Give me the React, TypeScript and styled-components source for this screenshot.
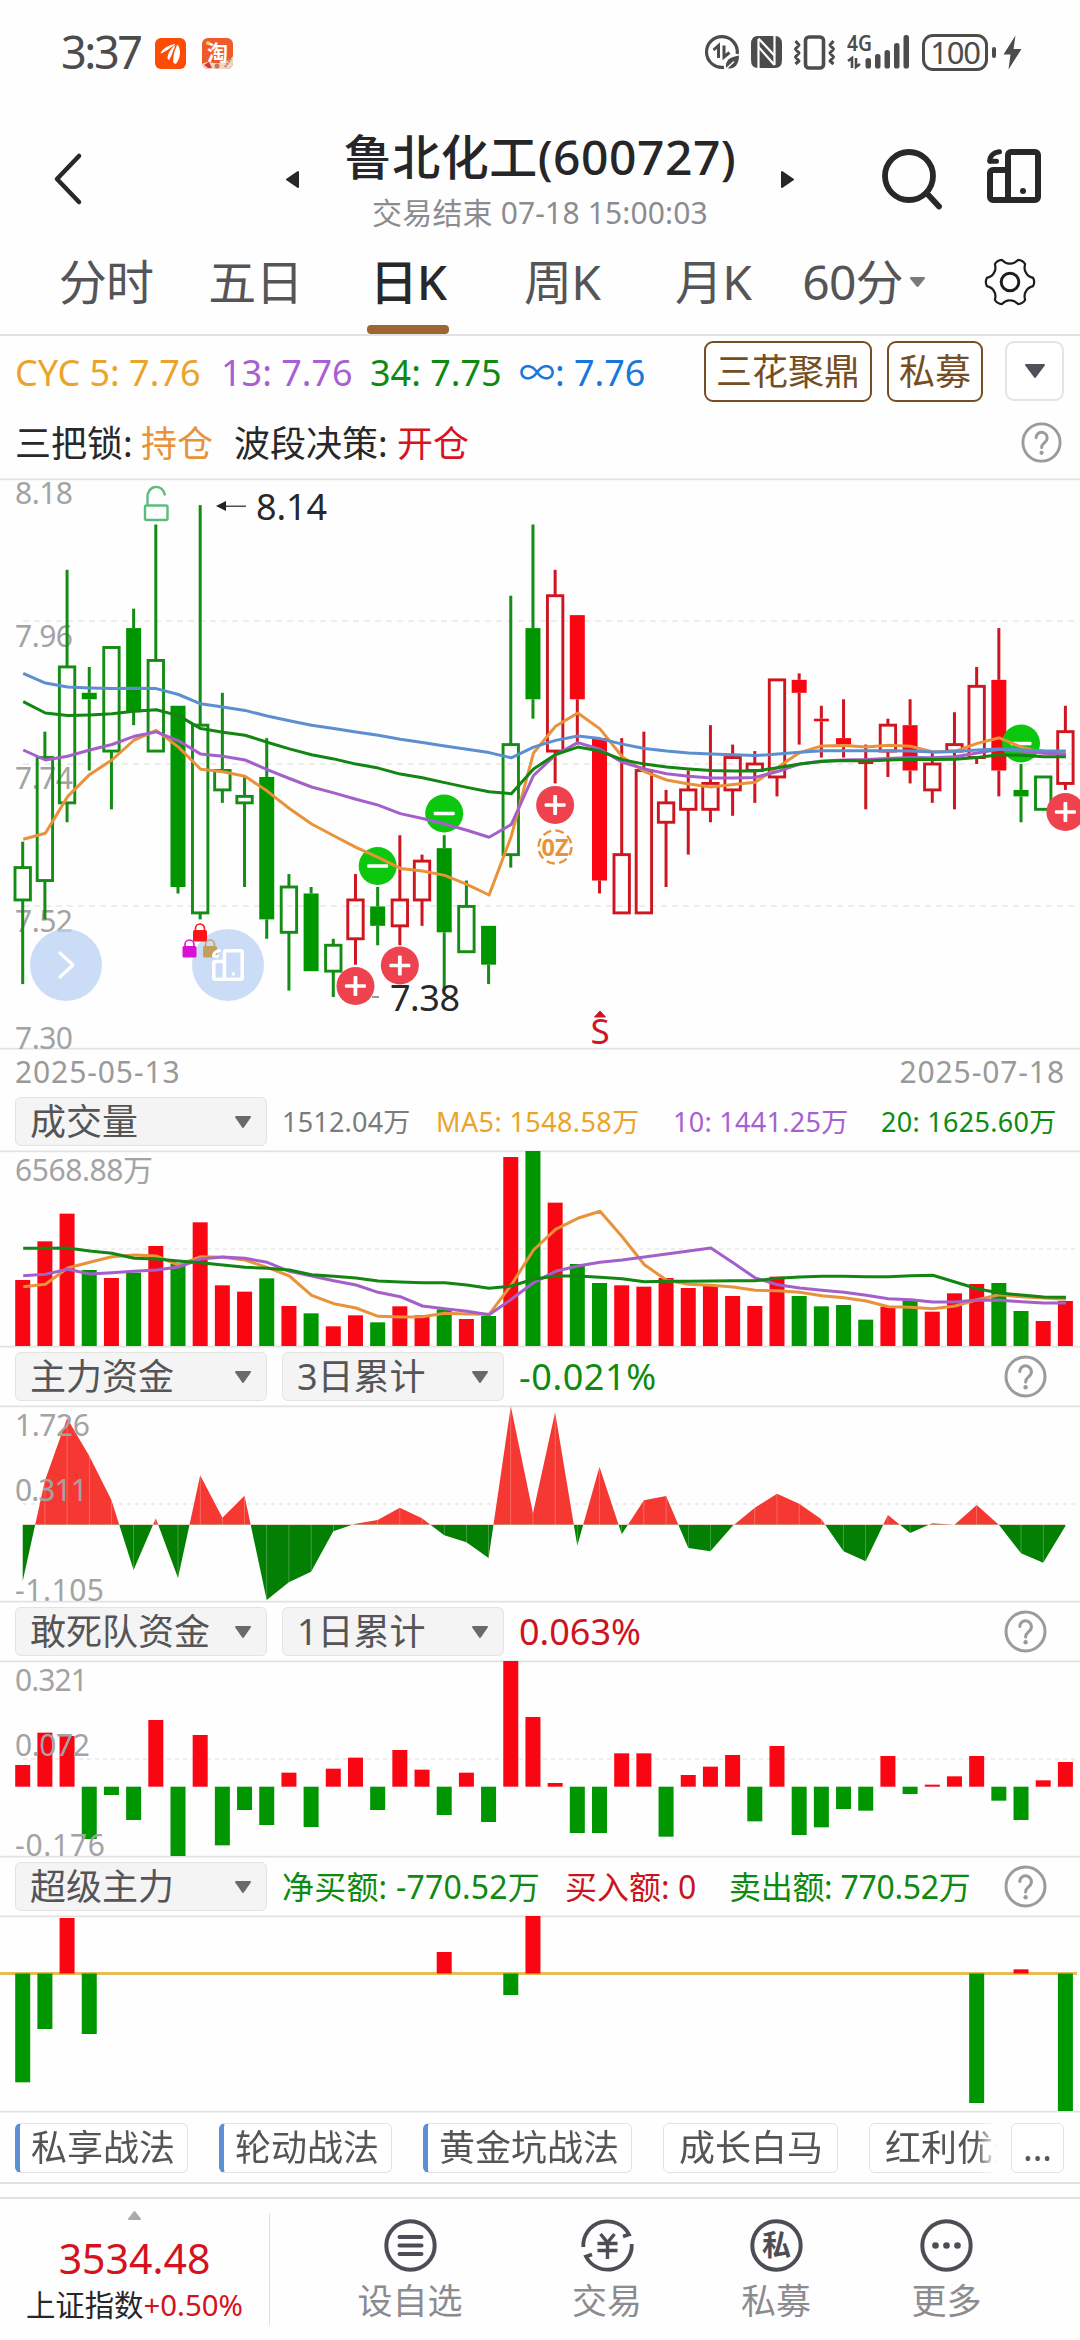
import React from "react";
import styled, { createGlobalStyle } from "styled-components";

const Global = createGlobalStyle`
  * { box-sizing: border-box; }
  html, body { margin: 0; padding: 0; background: #fefefe; }
  body { font-family: "Noto Sans", "Noto Sans CJK SC", sans-serif; color: #262628; }
  svg { display: block; flex: none; overflow: visible; }
`;

const C = {
  ink: "#28282a",
  mid: "#555557",
  soft: "#8c8c90",
  axis: "#a3a3a3",
  rule: "#e2e2e2",
  up: "#fa0512",
  upLine: "#cf1620",
  down: "#009600",
  downLine: "#158c15",
  orange: "#e8923a",
  purple: "#a45fcb",
  green: "#128512",
  blue: "#5c8fcf",
};

const Screen = styled.div`
  width: 1080px;
  height: 2340px;
  display: flex;
  flex-direction: column;
  overflow: hidden;
  background: #fefefe;
`;

/* ---------- status bar ---------- */

const StatusBar = styled.div`
  height: 106px;
  display: flex;
  align-items: center;
  padding: 0 58px 0 61px;
  color: #4c4c4c;
`;
const Clock = styled.span`
  font-size: 45px;
  line-height: 50px;
  letter-spacing: -2.4px;
  width: 94px;
  margin-top: -2px;
`;
const AppIcons = styled.div`
  display: flex;
  gap: 16px;
  flex: 1;
`;
const StatusIcons = styled.div`
  display: flex;
  align-items: center;
  height: 38px;
  margin-top: -2px;
`;
const StatusSlot = styled.div<{ $ml?: number }>`
  margin-left: ${(p) => p.$ml ?? 0}px;
`;
const Battery = styled.div`
  width: 66px;
  height: 37px;
  border: 3px solid #4c4c4c;
  border-radius: 11px;
  font-size: 31px;
  line-height: 30px;
  letter-spacing: -1.2px;
  text-align: center;
  margin-left: 12px;
`;
const BatteryNub = styled.div`
  width: 4px;
  height: 11px;
  border-radius: 2px;
  background: #4c4c4c;
  margin: 0 7px 0 4px;
`;

/* ---------- title bar ---------- */

const TitleBar = styled.header`
  height: 134px;
  display: grid;
  grid-template-columns: 286px 1fr 286px;
  align-items: center;
`;
const TitleLeft = styled.div`
  padding: 12px 0 0 52px;
`;
const TitleMid = styled.div`
  display: flex;
  justify-content: space-between;
  align-items: center;
`;
const TitleText = styled.div`
  display: flex;
  flex-direction: column;
  align-items: center;
  padding-top: 14px;
`;
const StockName = styled.h1`
  margin: 0;
  font-size: 48px;
  line-height: 60px;
  font-weight: 500;
  letter-spacing: 0.5px;
  white-space: nowrap;
`;
const Subtitle = styled.span`
  font-size: 30px;
  line-height: 42px;
  margin-top: 5px;
  letter-spacing: 0.15px;
  color: ${C.soft};
  white-space: nowrap;
`;
const TitleRight = styled.div`
  display: flex;
  padding: 12px 0 0 88px;
  gap: 44px;
`;
const ArrowBox = styled.div`
  padding-top: 12px;
`;

/* ---------- period tabs ---------- */

const Tabs = styled.nav`
  height: 96px;
  padding-left: 31px;
  display: grid;
  grid-template-columns: 150px 149px 156px 152px 150px 151px 141px;
  border-bottom: 2px solid ${C.rule};
`;
const Tab = styled.div<{ $active?: boolean }>`
  display: flex;
  align-items: center;
  justify-content: center;
  gap: 7px;
  position: relative;
  padding-bottom: 11px;
  font-size: 48px;
  letter-spacing: -0.8px;
  line-height: 60px;
  font-weight: ${(p) => (p.$active ? 500 : 400)};
  color: ${(p) => (p.$active ? C.ink : C.mid)};
  &::after {
    content: "";
    display: ${(p) => (p.$active ? "block" : "none")};
    position: absolute;
    bottom: 0;
    left: calc(50% - 41px);
    width: 82px;
    height: 9px;
    border-radius: 4px;
    background: #9c6733;
  }
`;

/* ---------- indicator summary ---------- */

const Summary = styled.section`
  height: 142px;
  padding: 4px 18px 0 15px;
`;
const SummaryRow = styled.div<{ $h: number }>`
  height: ${(p) => p.$h}px;
  display: flex;
  align-items: center;
  font-size: 36px;
  line-height: 48px;
  white-space: nowrap;
`;
const Value = styled.span<{ $c: string; $w?: number }>`
  color: ${(p) => p.$c};
  padding-top: 4px;
  ${(p) => (p.$w ? `width: ${p.$w}px;` : "")}
`;
const Spacer = styled.div`
  flex: 1;
`;
const OutlineButton = styled.button`
  font: inherit;
  font-size: 36px;
  line-height: 48px;
  height: 61px;
  padding: 2px 10px 0;
  margin-right: 15px;
  background: #fff;
  color: #754e24;
  border: 2px solid #754e24;
  border-radius: 9px;
`;
const DropButton = styled.button`
  width: 59px;
  height: 60px;
  margin-left: 7px;
  margin-right: -2px;
  padding: 0;
  display: flex;
  align-items: center;
  justify-content: center;
  background: #fff;
  border: 2px solid #e4e4e4;
  border-radius: 9px;
`;

/* ---------- panels ---------- */

const ChartBox = styled.div`
  position: relative;
`;
const FloatButton = styled.div<{ $x: number }>`
  position: absolute;
  left: ${(p) => p.$x}px;
  bottom: 49px;
  width: 72px;
  height: 72px;
  border-radius: 50%;
  display: flex;
  align-items: center;
  justify-content: center;
  background: rgba(188, 210, 243, 0.78);
`;
const LockBadge = styled.svg`
  position: absolute;
  left: -10px;
  top: -6px;
`;
const FloatIcon = styled.div`
  position: relative;
`;
const Dates = styled.div`
  height: 43px;
  padding: 0 15px;
  display: flex;
  justify-content: space-between;
  align-items: center;
  font-size: 30px;
  letter-spacing: 0.9px;
  line-height: 40px;
  color: #999;
`;
const PanelHead = styled.div`
  height: 57px;
  padding: 0 33px 0 15px;
  display: flex;
  align-items: center;
  white-space: nowrap;
`;
const Picker = styled.div<{ $w: number }>`
  flex: none;
  width: ${(p) => p.$w}px;
  height: 49px;
  margin-right: 15px;
  padding: 0 15px 0 14px;
  display: flex;
  align-items: center;
  justify-content: space-between;
  background: #f4f4f4;
  border: 1px solid #e3e3e3;
  border-radius: 6px;
  font-size: 36px;
  line-height: 46px;
  color: ${C.mid};
`;
const Figure = styled.span<{ $c: string; $size: number; $w?: number; $ls?: number }>`
  flex: none;
  color: ${(p) => p.$c};
  font-size: ${(p) => p.$size}px;
  line-height: 46px;
  letter-spacing: ${(p) => p.$ls ?? 0}px;
  ${(p) => (p.$w ? `width: ${p.$w}px;` : "")}
`;

/* ---------- strategy tags ---------- */

const TagRow = styled.div`
  height: 71px;
  padding: 0 16px 0 15px;
  display: flex;
  align-items: center;
  border-bottom: 2px solid ${C.rule};
`;
const TagScroll = styled.div`
  width: 981px;
  display: flex;
  gap: 31px;
  overflow: hidden;
  mask-image: linear-gradient(to right, #000 960px, transparent 983px);
`;
const Tag = styled.div<{ $marked?: boolean }>`
  flex: none;
  height: 50px;
  padding: 0 ${(p) => (p.$marked ? 12 : 14)}px 0 ${(p) => (p.$marked ? 11 : 15)}px;
  border: 1px solid #e2e2e2;
  border-left: ${(p) => (p.$marked ? "5px solid #5b90d6" : "1px solid #e2e2e2")};
  border-radius: 6px;
  font-size: 36px;
  line-height: 47px;
  color: ${C.mid};
  background: #fff;
`;
const MoreTag = styled(Tag)`
  width: 53px;
  margin-left: 15px;
  padding: 0;
  text-align: center;
`;

/* ---------- bottom bar ---------- */

const BottomBar = styled.footer`
  height: 143px;
  margin-top: 13px;
  border-top: 2px solid ${C.rule};
  display: flex;
`;
const IndexBox = styled.div`
  width: 269px;
  display: flex;
  flex-direction: column;
  align-items: center;
  padding-top: 12px;
`;
const IndexValue = styled.div`
  margin-top: 10px;
  font-size: 41px;
  line-height: 56px;
  color: #d3131d;
`;
const IndexName = styled.div`
  font-size: 29.4px;
  line-height: 40px;
  margin-top: -1px;
  white-space: nowrap;
  em { font-style: normal; color: #d3131d; }
`;
const Divider = styled.div`
  width: 1px;
  height: 112px;
  margin-top: 14px;
  background: #dedede;
`;
const NavItem = styled.div<{ $w: number }>`
  width: ${(p) => p.$w}px;
  padding-top: 20px;
  display: flex;
  flex-direction: column;
  align-items: center;
  font-size: 35px;
  line-height: 46px;
  color: ${C.soft};
  svg { margin-bottom: 6px; }
`;

/* ---------- icons ---------- */

const Caret = ({ w = 16, h = 12, color = "#6a6a6c", dir = "down" }: { w?: number; h?: number; color?: string; dir?: string }) => {
  const d: Record<string, string> = {
    down: `M1 1H${w - 1}L${w / 2} ${h - 1}Z`,
    up: `M1 ${h - 1}H${w - 1}L${w / 2} 1Z`,
    left: `M${w - 1} 1V${h - 1}L1 ${h / 2}Z`,
    right: `M1 1V${h - 1}L${w - 1} ${h / 2}Z`,
  };
  return (
    <svg width={w} height={h}>
      <path d={d[dir]} fill={color} stroke={color} strokeWidth="2" strokeLinejoin="round" />
    </svg>
  );
};

const Help = ({ size = 43 }: { size?: number }) => (
  <svg width={size} height={size} viewBox="0 0 43 43" fill="none" stroke="#9b9b9b" strokeWidth="3">
    <circle cx="21.5" cy="21.5" r="19.5" />
    <path d="M15.8 16.6a5.8 5.8 0 1 1 9.8 4.2c-2.2 2-4 3-4 6.2" strokeLinecap="round" />
    <circle cx="21.6" cy="32.3" r="2.2" fill="#9b9b9b" stroke="none" />
  </svg>
);

const DevicesIcon = ({ size, color, sw = 6 }: { size: number; color: string; sw?: number }) => (
  <svg width={size} height={size} viewBox="0 0 54 54" fill="none" stroke={color} strokeWidth={sw} strokeLinejoin="round">
    <path d="M21 51V6a3 3 0 0 1 3-3h24a3 3 0 0 1 3 3v42a3 3 0 0 1-3 3H6a3 3 0 0 1-3-3V24a3 3 0 0 1 3-3h15" />
    <path d="M12.500 2.700C6 3.500 2.700 7.500 2.800 12" strokeLinecap="round" strokeWidth="5" />
    <path d="M3 12.200h6.500" strokeLinecap="round" strokeWidth="5" />
    <circle cx="36" cy="42" r="3" fill={color} stroke="none" />
  </svg>
);

const gearPath = (() => {
  const pts: string[] = [];
  const at = (r: number, a: number) => {
    const t = (a * Math.PI) / 180;
    return `${(25 + r * Math.cos(t)).toFixed(2)} ${(25 + r * Math.sin(t)).toFixed(2)}`;
  };
  for (let k = 0; k < 6; k++) {
    const a = k * 60;
    pts.push(`${k ? "L" : "M"}${at(23.5, a - 10)}Q${at(25.2, a)} ${at(23.5, a + 10)}`);
    pts.push(`C${at(20, a + 15)} ${at(18.3, a + 23)} ${at(18.5, a + 30)}`);
    pts.push(`C${at(18.3, a + 37)} ${at(20, a + 45)} ${at(23.5, a + 50)}`);
  }
  return pts.map((s) => s.replace(/(\d) (?=-?\d+\.\d+ )/g, "$1 ")).join("") + "Z";
})();

const Gear = () => (
  <svg width="50" height="50" fill="none" stroke="#1c1c1c">
    <path d={gearPath} strokeWidth="2.2" strokeLinejoin="round" />
    <circle cx="25" cy="25" r="8.8" strokeWidth="3" />
  </svg>
);

/* ---------- chart helpers ---------- */

const x = (i: number) => 22.7 + 22.185 * i;
const BAR = 15;

const Label = ({ y, w, children, lx = 15 }: { y: number; w: number; lx?: number; children: string }) => (
  <text x={lx} y={y} fontSize="30" fill={C.axis} textLength={w} lengthAdjust="spacing">
    {children}
  </text>
);

const Line = ({ pts, color, map, w = 3 }: { pts: number[]; color: string; map: (v: number) => number; w?: number }) => (
  <polyline
    points={pts.map((p, i) => `${(x(i) + 0.5).toFixed(1)},${map(p).toFixed(1)}`).join(" ")}
    fill="none"
    stroke={color}
    strokeWidth={w}
    strokeLinejoin="round"
  />
);

const Frame = ({ top, h, children }: { top: number; h: number; children: React.ReactNode }) => (
  <svg width="1080" height={h} viewBox={`0 ${top} 1080 ${h}`}>
    <rect x="0" y={top + 0.5} width="1080" height="1.7" fill={C.rule} />
    <rect x="0" y={top + h - 2.2} width="1080" height="1.7" fill={C.rule} />
    {children}
  </svg>
);

const Grid = ({ y, dash }: { y: number; dash: string }) => (
  <line x1="23" x2="1077" y1={y} y2={y} stroke="#ededed" strokeWidth="2" strokeDasharray={dash} />
);

/* ---------- candles: side, filled, high, low, body top, body bottom (ticks under 8.18) ---------- */

type Candle = [string, number, number, number, number, number];
const candles: Candle[] = [
  ["g", 0, 56, 78, 60, 65], ["g", 0, 39, 68, 43, 62], ["g", 0, 14, 53, 29, 50], ["g", 1, 29, 45, 33, 34],
  ["g", 0, 26, 51, 26, 42], ["g", 1, 20, 38, 23, 36], ["g", 0, 7, 42, 28, 42], ["g", 1, 35, 64, 35, 63],
  ["g", 0, 4, 68, 38, 67], ["g", 0, 33, 50, 45, 48], ["g", 0, 46, 63, 49, 50], ["g", 1, 40, 71, 46, 68],
  ["g", 0, 61, 79, 63, 70], ["g", 1, 63, 76, 64, 76], ["g", 0, 71, 80, 72, 76], ["r", 0, 61, 75, 65, 71],
  ["g", 1, 63, 72, 66, 69], ["r", 0, 55, 72, 65, 69], ["r", 0, 58, 69, 59, 65], ["g", 1, 55, 79, 57, 70],
  ["g", 0, 62, 73, 66, 73], ["g", 1, 69, 78, 69, 75], ["g", 0, 18, 60, 41, 58], ["g", 1, 7, 37, 23, 34],
  ["r", 0, 14, 47, 18, 42], ["r", 1, 21, 41, 21, 34], ["r", 1, 40, 64, 40, 62], ["r", 0, 40, 67, 58, 67],
  ["r", 0, 39, 67, 45, 67], ["r", 0, 48, 63, 50, 53], ["r", 0, 45, 58, 48, 51], ["r", 0, 38, 53, 47, 51],
  ["r", 0, 41, 52, 43, 48], ["r", 0, 42, 50, 44, 45], ["r", 0, 31, 49, 31, 46], ["r", 1, 30, 41, 31, 33],
  ["r", 1, 35, 43, 37, 37.4], ["r", 1, 34, 43, 40, 41], ["r", 1, 41, 51, 43.6, 44], ["r", 0, 37, 46, 38, 42],
  ["r", 1, 34, 47, 38, 45], ["r", 0, 42, 50, 44, 48], ["r", 0, 36, 51, 41, 42], ["r", 0, 29, 44, 32, 43],
  ["r", 1, 23, 49, 31, 45], ["g", 1, 44, 53, 48, 49], ["g", 0, 46, 51, 46, 51], ["r", 0, 35, 48, 39, 47],
];

const cyc = {
  inf: [550, 576, 587, 589, 591, 590, 591, 607, 632, 641, 650, 665, 678, 690, 699, 708, 717, 728, 737, 746, 755, 764, 778, 749, 731, 719, 726, 741, 753, 760, 765, 768, 770, 772, 768, 763, 759, 759, 759, 759, 760, 762, 761, 757, 754, 757, 759, 760],
  c34: [626, 657, 664, 662, 659, 652, 648, 664, 699, 709, 717, 736, 754, 770, 781, 795, 806, 822, 832, 845, 858, 870, 875, 808, 769, 749, 760, 783, 795, 803, 808, 812, 814, 814, 805, 795, 788, 785, 787, 784, 782, 783, 782, 777, 770, 771, 775, 775],
  c13: [757, 784, 774, 757, 742, 720, 708, 732, 768, 774, 784, 810, 834, 857, 873, 890, 906, 929, 942, 957, 974, 993, 958, 826, 770, 737, 755, 790, 808, 821, 828, 833, 833, 831, 815, 795, 787, 784, 783, 780, 777, 778, 775, 765, 755, 760, 766, 768],
  c5: [998, 982, 883, 823, 784, 730, 704, 749, 809, 816, 828, 868, 915, 957, 989, 1020, 1047, 1077, 1084, 1096, 1120, 1149, 990, 765, 693, 657, 700, 775, 815, 838, 849, 857, 850, 844, 804, 764, 746, 745, 749, 744, 747, 762, 761, 739, 724, 749, 765, 768],
};

const tickY = (n: number) => 479.2 + n * 6.473;
const lineY = (v: number) => 470 + v / 2.7034;

const Mark = ({ i, y, plus }: { i: number; y: number; plus?: boolean }) => (
  <g>
    <circle cx={x(i)} cy={y} r="19" fill={plus ? "#ee424f" : "#0bc80e"} />
    <rect x={x(i) - 10.5} y={y - 1.8} width="21" height="3.6" rx="1" fill="#fff" />
    {plus && <rect x={x(i) - 1.9} y={y - 10} width="3.8" height="20" rx="1" fill="#fff" />}
  </g>
);

const Padlock = ({ cx, y, color }: { cx: number; y: number; color: string }) => (
  <g>
    <path d={`M${cx - 4.5} ${y + 8}V${y + 5.5}a4.5 4.5 0 0 1 9 0V${y + 8}`} fill="none" stroke={color} strokeWidth="1.6" />
    <rect x={cx - 7} y={y + 7} width="14" height="11.5" rx="1.5" fill={color} />
  </g>
);

const PriceChart = () => (
  <Frame top={478} h={572}>
    <Grid y={621} dash="6 5" />
    <Grid y={764} dash="6 5" />
    <Grid y={906} dash="6 5" />
    <Label y={504} w={58}>8.18</Label>
    <Label y={647} w={58}>7.96</Label>
    <Label y={789} w={58}>7.74</Label>
    <Label y={931.5} w={58}>7.52</Label>
    <Label y={1048.5} w={58}>7.30</Label>
    {candles.map(([side, filled, hi, lo, top, bot], i) => {
      const red = side === "r";
      const stroke = red ? C.upLine : C.downLine;
      const cx = x(i);
      return (
        <g key={i}>
          {hi < top && <rect x={cx - 1.5} y={tickY(hi)} width="3" height={tickY(top) - tickY(hi)} fill={stroke} />}
          {lo > bot && <rect x={cx - 1.5} y={tickY(bot)} width="3" height={tickY(lo) - tickY(bot)} fill={stroke} />}
          {filled ? (
            <rect x={cx - 7.5} y={tickY(top)} width={BAR} height={tickY(bot) - tickY(top)} fill={red ? C.up : C.down} />
          ) : (
            <rect x={cx - 7.7} y={tickY(top)} width="15.4" height={tickY(bot) - tickY(top)} fill="none" stroke={stroke} strokeWidth="2.9" />
          )}
        </g>
      );
    })}
    <line x1="372" x2="379" y1="997" y2="997" stroke="#333" strokeWidth="1" />
    <Mark i={16} y={866} />
    <Mark i={19} y={813.5} />
    <Mark i={45} y={743.5} />
    <Line pts={cyc.c5} color={C.orange} map={lineY} />
    <Line pts={cyc.c13} color={C.purple} map={lineY} />
    <Line pts={cyc.c34} color={C.green} map={lineY} />
    <Line pts={cyc.inf} color={C.blue} map={lineY} />
    <path d="M216 506l10-5v10Z" fill="#222" />
    <line x1="225" x2="246" y1="506.2" y2="506.2" stroke="#222" strokeWidth="1.2" />
    <text x="256" y="520" fontSize="36" fill={C.ink} textLength="71">8.14</text>
    <text x="390" y="1011" fontSize="36" fill={C.ink} textLength="70">7.38</text>
    <Mark i={15} y={986} plus />
    <Mark i={17} y={965.5} plus />
    <Mark i={24} y={805} plus />
    <Mark i={47} y={812} plus />
    <g fill="none" stroke="#5dbb7f" strokeWidth="2.4">
      <rect x="145" y="505.5" width="22.5" height="14.5" rx="1.5" />
      <path d="M147.5 505V498a8.5 9.5 0 0 1 17.500-2.500" />
    </g>
    <circle cx="555" cy="847" r="16.5" fill="none" stroke={C.orange} strokeWidth="2.4" strokeDasharray="8.5 4.46" />
    <text x="541.5" y="855.5" fontSize="23" fontWeight="700" fill={C.orange} textLength="27" lengthAdjust="spacingAndGlyphs">0Z</text>
    <path d="M600 1011l5.500 6h-11Z" fill={C.upLine} stroke={C.upLine} />
    <text x="600" y="1044" fontSize="35" fill={C.upLine} textAnchor="middle">S</text>
  </Frame>
);

/* ---------- volume ---------- */

const volume = "720r 604r 521r 690g 714r 698g 618r 672g 547r 736r 755r 715g 798r 820g 859r 826r 847g 799r 826r 808g 837r 828g 351r 333g 488r 672g 729g 736r 740r 714r 744r 736r 768r 798r 710r 768g 799g 795g 839g 800r 782g 815r 760r 732r 729g 813g 843r 783r".split(" ");
const volMa = {
  m5: [740, 733, 684, 667, 650, 645, 648, 675, 650, 652, 660, 682, 708, 766, 791, 804, 829, 831, 830, 820, 822, 823, 735, 630, 568, 535, 514, 590, 674, 721, 733, 736, 741, 751, 752, 757, 767, 773, 783, 800, 802, 806, 798, 779, 764, 770, 774, 778],
  m10: [707, 703, 688, 702, 698, 694, 690, 681, 657, 651, 655, 667, 694, 708, 722, 735, 757, 770, 798, 806, 814, 824, 778, 728, 694, 678, 667, 660, 651, 642, 633, 624, 668, 714, 734, 744, 751, 757, 766, 776, 779, 786, 786, 780, 781, 785, 789, 789],
  m20: [625, 625, 624, 633, 640, 655, 657, 663, 668, 675, 682, 685, 690, 704, 709, 714, 723, 726, 728, 728, 735, 745, 738, 718, 708, 708, 712, 716, 725, 724, 724, 723, 722, 722, 715, 711, 709, 709, 710, 710, 707, 706, 726, 746, 759, 765, 771, 772],
};
const volY = (v: number) => 1040 + v / 3;

const VolumeChart = () => (
  <Frame top={1150} h={198}>
    <Grid y={1249} dash="4 4" />
    <Label y={1181} w={138}>6568.88万</Label>
    {volume.map((s, i) => {
      const y = volY(parseInt(s, 10));
      return <rect key={i} x={x(i) - 7.5} y={y} width={BAR} height={1346 - y} fill={s.endsWith("r") ? C.up : C.down} />;
    })}
    <Line pts={volMa.m5} color={C.orange} map={volY} />
    <Line pts={volMa.m10} color={C.purple} map={volY} />
    <Line pts={volMa.m20} color={C.green} map={volY} />
  </Frame>
);

/* ---------- main funds area ---------- */

const funds = [694, 392, 205, 318, 450, 660, 505, 684, 376, 503, 437, 750, 697, 665, 544, 521, 510, 473, 505, 556, 577, 624, 169, 490, 187, 587, 350, 553, 451, 438, 594, 604, 528, 473, 431, 461, 508, 604, 634, 495, 549, 520, 524, 465, 524, 610, 638, 528];
const fundsZero = 1524.7;
const fundsPath = `M${x(0)} ${fundsZero}` + funds.map((v, i) => `L${x(i).toFixed(1)} ${(1350 + v / 3).toFixed(1)}`).join("") + `L${x(47)} ${fundsZero}Z`;

const FundsChart = () => (
  <Frame top={1405} h={198}>
    <clipPath id="above"><rect x="0" y="1405" width="1080" height={fundsZero - 1405} /></clipPath>
    <clipPath id="below"><rect x="0" y={fundsZero} width="1080" height="80" /></clipPath>
    <clipPath id="area"><path d={fundsPath} /></clipPath>
    <Grid y={1504} dash="4 4" />
    <path d={fundsPath} fill="#f63832" clipPath="url(#above)" />
    <path d={fundsPath} fill="#038003" clipPath="url(#below)" />
    <g clipPath="url(#area)">
      {funds.map((_, i) => (
        <rect key={i} x={x(i) - 0.3} y="1406" width="0.6" height="196" fill="#fff" opacity="0.4" />
      ))}
    </g>
    <Label y={1436} w={75}>1.726</Label>
    <Label y={1500.5} w={73}>0.311</Label>
    <Label y={1601} w={89}>-1.105</Label>
  </Frame>
);

/* ---------- daredevil funds ---------- */

const squad = [495, 398, 408, 717, 585, 660, 360, 768, 405, 736, 630, 675, 518, 681, 506, 473, 630, 450, 509, 645, 518, 666, 183, 351, 549, 699, 699, 460, 460, 710, 525, 500, 465, 664, 438, 705, 682, 627, 632, 468, 582, 554, 529, 468, 602, 660, 541, 486];

const SignedBar = ({ i, y, zero }: { i: number; y: number; zero: number }) => (
  <rect x={x(i) - 7.5} y={Math.min(y, zero)} width={BAR} height={Math.abs(y - zero)} fill={y < zero ? C.up : C.down} />
);

const SquadChart = () => (
  <Frame top={1660} h={198}>
    <Grid y={1759} dash="4 4" />
    {squad.map((v, i) => (
      <SignedBar key={i} i={i} y={1600 + v / 3} zero={1786.7} />
    ))}
    <Label y={1690.5} w={73}>0.321</Label>
    <Label y={1755.5} w={75}>0.072</Label>
    <Label y={1856} w={90}>-0.176</Label>
  </Frame>
);

const superBars: [number, number][] = [[0, 697], [1, 537], [2, 204], [3, 552], [19, 306], [22, 435], [23, 198], [43, 759], [45, 358], [47, 783]];

const SuperChart = () => (
  <Frame top={1915} h={198}>
    <rect x="0" y="1972" width="1077" height="3" fill="#e5bd55" />
    {superBars.map(([i, v]) => (
      <SignedBar key={i} i={i} y={1850 + v / 3} zero={1973.5} />
    ))}
  </Frame>
);

const grey = "#4c4c4c";

export default function App() {
  return (
    <Screen>
      <Global />
      <StatusBar>
        <Clock>3:37</Clock>
        <AppIcons>
          <svg width="31" height="31" viewBox="0 0 31 31">
            <rect width="31" height="31" rx="6" fill="#fd4c05" />
            <path d="M6 15C8 11 13 8 19.500 6.500C15 9.500 11 13 6 15Z" fill="#fff" stroke="#fff" />
            <path d="M12.500 21C12 16 16 10 20.500 7C18 12 17.500 17 14 22Z" fill="#fff" />
            <path d="M18.500 25C17.500 18 20 11 22.500 6.500C26 11 26 19 21 26Z" fill="#fff" />
          </svg>
          <svg width="31" height="31" viewBox="0 0 31 31">
            <rect width="31" height="31" rx="6" fill="#ee5a2c" />
            <path d="M0 26C6 22 12 26 17 25S27 24 31 18V25a6 6 0 0 1-6 6H6a6 6 0 0 1-6-6Z" fill="#f3d6c2" />
            <path d="M2 27l5-3 3 6H6Z" fill="#d8343a" />
            <circle cx="15" cy="28" r="2.5" fill="#c9764f" />
            <path d="M23 29l6-8" stroke="#a8736a" strokeWidth="2" strokeDasharray="2 1" />
            <circle cx="6" cy="5" r="2" fill="#ffd43a" />
            <text x="15.5" y="21.5" fontSize="21" fontWeight="700" fill="#fff" textAnchor="middle">淘</text>
          </svg>
        </AppIcons>
        <StatusIcons>
          <svg width="34" height="35" viewBox="0 0 34 35" fill="none" stroke={grey} strokeWidth="3.2">
            <path d="M19 32.300A15.400 15.400 0 1 1 32.200 19" />
            <path d="M8.500 15l5-4.500V23M19 10.500V22l5.500-4.500" strokeWidth="3" />
            <path d="M21 33C20 25 25 22 34 20.500C34 30 29 34 24 33.500Z" fill={grey} stroke="none" />
            <path d="M21 34l8-7.500" stroke="#fff" strokeWidth="1.5" />
          </svg>
          <StatusSlot $ml={12}>
            <svg width="31" height="32" viewBox="0 0 31 32">
              <path d="M7 0H24Q31 0 31 8V24Q31 32 24 32H7Q0 32 0 24V8Q0 0 7 0Z" fill={grey} />
              <path d="M7.500 3V32M23.500 0V29" stroke="#fff" strokeWidth="2.2" fill="none" />
              <path d="M7.500 2.500L23.500 19.500M7.500 11L23.500 29" stroke="#fff" strokeWidth="2.2" fill="none" />
            </svg>
          </StatusSlot>
          <StatusSlot $ml={11}>
            <svg width="43" height="35" viewBox="0 0 43 35" fill="none" stroke={grey}>
              <rect x="12.5" y="2" width="18" height="31" rx="3.5" strokeWidth="3.6" />
              <path d="M2.500 6l3.500 4-3.500 4 3.500 4-3.500 4 3.500 4-3.500 3M40.500 6L37 10l3.500 4-3.500 4 3.500 4-3.500 4 3.500 3" strokeWidth="3" strokeLinejoin="round" />
            </svg>
          </StatusSlot>
          <StatusSlot $ml={11}>
            <svg width="63" height="36" viewBox="0 0 63 36" fill={grey}>
              <text x="0" y="17" fontSize="21" fontWeight="600" textLength="25" lengthAdjust="spacingAndGlyphs">4G</text>
              <path d="M1 27l4-3V34M9 24V33l4-3" fill="none" stroke={grey} strokeWidth="2.6" />
              <rect x="18.5" y="24" width="5.5" height="10.5" rx="2.6" />
              <rect x="28" y="20" width="5.5" height="14.5" rx="2.6" />
              <rect x="37.5" y="16" width="5.5" height="18.5" rx="2.6" />
              <rect x="47" y="9" width="5.5" height="25.5" rx="2.6" />
              <rect x="56.5" y="1" width="5.5" height="33.5" rx="2.6" />
            </svg>
          </StatusSlot>
          <Battery>100</Battery>
          <BatteryNub />
          <svg width="19" height="35" viewBox="0 0 19 35" fill={grey}>
            <path d="M12.500 0.500L0.500 19.500H7.500L5.500 34.500L18.500 14H10.500Z" />
          </svg>
        </StatusIcons>
      </StatusBar>

      <TitleBar>
        <TitleLeft>
          <svg width="32" height="54" viewBox="0 0 32 54" fill="none" stroke={C.ink} strokeWidth="4.5" strokeLinecap="round" strokeLinejoin="round">
            <path d="M27 4L5 27L27 50" />
          </svg>
        </TitleLeft>
        <TitleMid>
          <ArrowBox><Caret w={13} h={17} dir="left" color={C.ink} /></ArrowBox>
          <TitleText>
            <StockName>鲁北化工(600727)</StockName>
            <Subtitle>交易结束 07-18 15:00:03</Subtitle>
          </TitleText>
          <ArrowBox><Caret w={13} h={17} dir="right" color={C.ink} /></ArrowBox>
        </TitleMid>
        <TitleRight>
          <svg width="61" height="61" viewBox="0 0 61 61" fill="none" stroke={C.ink} strokeWidth="5.8" strokeLinecap="round">
            <circle cx="27" cy="27" r="24" />
            <path d="M44.500 44L57 57.500" />
          </svg>
          <DevicesIcon size={54} color={C.ink} />
        </TitleRight>
      </TitleBar>

      <Tabs>
        <Tab>分时</Tab>
        <Tab>五日</Tab>
        <Tab $active>日K</Tab>
        <Tab>周K</Tab>
        <Tab>月K</Tab>
        <Tab>60分<Caret w={15} h={10} color="#7a7a7a" /></Tab>
        <Tab><Gear /></Tab>
      </Tabs>

      <Summary>
        <SummaryRow $h={62}>
          <Value $c="#eba42b" $w={206}>CYC 5: 7.76</Value>
          <Value $c="#a75fd2" $w={149}>13: 7.76</Value>
          <Value $c="#0e8a10" $w={149}>34: 7.75</Value>
          <Value $c="#1977dc">∞: 7.76</Value>
          <Spacer />
          <OutlineButton>三花聚鼎</OutlineButton>
          <OutlineButton>私募</OutlineButton>
          <DropButton><Caret w={20} h={14} color="#505058" /></DropButton>
        </SummaryRow>
        <SummaryRow $h={80}>
          <Value $c={C.ink} $w={126}>三把锁:</Value>
          <Value $c="#e8923a" $w={93}>持仓</Value>
          <Value $c={C.ink} $w={163}>波段决策:</Value>
          <Value $c="#d8131e">开仓</Value>
          <Spacer />
          <Help size={41} />
        </SummaryRow>
      </Summary>

      <ChartBox>
        <PriceChart />
        <FloatButton $x={30}>
          <svg width="18" height="30" viewBox="0 0 18 30" fill="none" stroke="#fff" strokeWidth="3.2" strokeLinecap="round" strokeLinejoin="round">
            <path d="M3 3L16 15L3 27" />
          </svg>
        </FloatButton>
        <FloatButton $x={192}>
          <LockBadge width="36" height="36" viewBox="182 923 36 36">
            <Padlock cx={200} y={923} color="#fb1418" />
            <Padlock cx={189.5} y={939} color="#d911d0" />
            <Padlock cx={210} y={939} color="#c3a05e" />
          </LockBadge>
          <FloatIcon>
            <DevicesIcon size={32} color="#fff" />
          </FloatIcon>
        </FloatButton>
      </ChartBox>
      <Dates>
        <span>2025-05-13</span>
        <span>2025-07-18</span>
      </Dates>
      <PanelHead>
        <Picker $w={252}>成交量<Caret /></Picker>
        <Figure $c="#7b7b7b" $size={27} $w={154} $ls={0.2}>1512.04万</Figure>
        <Figure $c="#eba42b" $size={27} $w={237} $ls={0.4}>MA5: 1548.58万</Figure>
        <Figure $c="#a75fd2" $size={27} $w={208} $ls={0.3}>10: 1441.25万</Figure>
        <Figure $c="#0e8a10" $size={27} $ls={0.3}>20: 1625.60万</Figure>
      </PanelHead>
      <VolumeChart />

      <PanelHead>
        <Picker $w={252}>主力资金<Caret /></Picker>
        <Picker $w={222}>3日累计<Caret /></Picker>
        <Figure $c="#0e8a10" $size={36} $ls={0.6}>-0.021%</Figure>
        <Spacer />
        <Help />
      </PanelHead>
      <FundsChart />

      <PanelHead>
        <Picker $w={252}>敢死队资金<Caret /></Picker>
        <Picker $w={222}>1日累计<Caret /></Picker>
        <Figure $c="#cc1420" $size={36}>0.063%</Figure>
        <Spacer />
        <Help />
      </PanelHead>
      <SquadChart />

      <PanelHead>
        <Picker $w={252}>超级主力<Caret /></Picker>
        <Figure $c="#0e8a10" $size={32} $w={283} $ls={0.2}>净买额: -770.52万</Figure>
        <Figure $c="#cc1420" $size={32} $w={164}>买入额: 0</Figure>
        <Figure $c="#0e8a10" $size={32} $ls={-0.3}>卖出额: 770.52万</Figure>
        <Spacer />
        <Help />
      </PanelHead>
      <SuperChart />

      <TagRow>
        <TagScroll>
          <Tag $marked>私享战法</Tag>
          <Tag $marked>轮动战法</Tag>
          <Tag $marked>黄金坑战法</Tag>
          <Tag>成长白马</Tag>
          <Tag>红利优选</Tag>
        </TagScroll>
        <MoreTag>...</MoreTag>
      </TagRow>

      <BottomBar>
        <IndexBox>
          <Caret w={13} h={9} dir="up" color="#aaa" />
          <IndexValue>3534.48</IndexValue>
          <IndexName>上证指数<em>+0.50%</em></IndexName>
        </IndexBox>
        <Divider />
        <NavItem $w={280}>
          <svg width="53" height="53" viewBox="0 0 53 53" fill="none" stroke="#4d4d55" strokeWidth="4">
            <circle cx="26.5" cy="26.5" r="24.2" />
            <path d="M15.500 18H37.500M15.500 26.500H37.500M15.500 35H37.500" strokeLinecap="round" />
          </svg>
          设自选
        </NavItem>
        <NavItem $w={114}>
          <svg width="53" height="53" viewBox="0 0 53 53" fill="none" stroke="#4d4d55" strokeWidth="3.8">
            <path d="M2.300 28A24.200 24.200 0 0 1 48 15.500L42 17.500M50.700 25A24.200 24.200 0 0 1 5 37.500L11 35.500" />
            <path d="M19.500 15L26.500 23.500L33.500 15M26.500 23.500V40M16.500 24.500H36.500M16.500 31.500H36.500" strokeWidth="3.4" />
          </svg>
          交易
        </NavItem>
        <NavItem $w={224}>
          <svg width="53" height="53" viewBox="0 0 53 53">
            <circle cx="26.5" cy="26.5" r="24.2" fill="none" stroke="#4d4d55" strokeWidth="4" />
            <text x="26.5" y="37" fontSize="29" fontWeight="700" fill="#4d4d55" textAnchor="middle">私</text>
          </svg>
          私募
        </NavItem>
        <NavItem $w={117}>
          <svg width="53" height="53" viewBox="0 0 53 53" fill="#4d4d55">
            <circle cx="26.5" cy="26.5" r="24.2" fill="none" stroke="#4d4d55" strokeWidth="4" />
            <circle cx="15.5" cy="26.5" r="3.3" />
            <circle cx="26.5" cy="26.5" r="3.3" />
            <circle cx="37.5" cy="26.5" r="3.3" />
          </svg>
          更多
        </NavItem>
      </BottomBar>
    </Screen>
  );
}
